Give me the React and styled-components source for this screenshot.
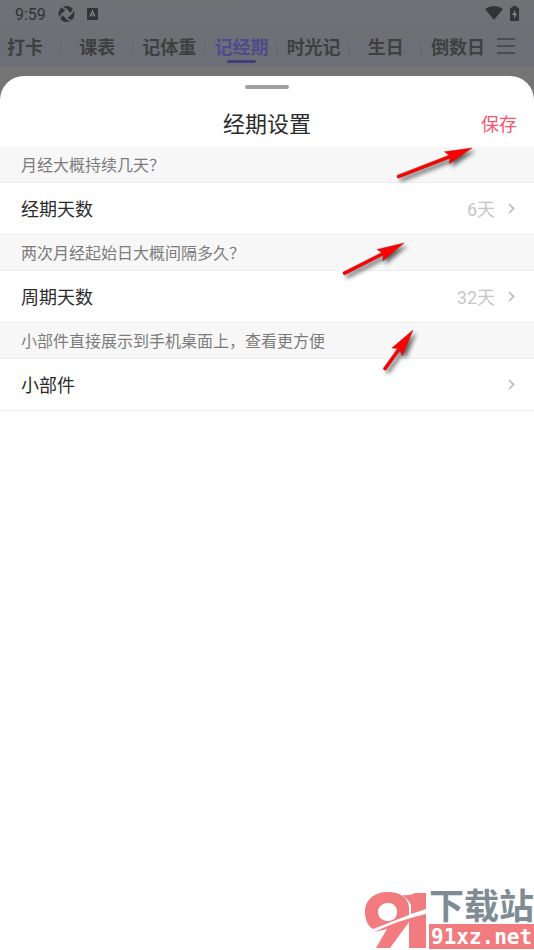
import styled, { createGlobalStyle } from 'styled-components'

const GlobalStyle = createGlobalStyle`
  *,
  *::before,
  *::after {
    box-sizing: border-box;
  }

  body {
    margin: 0;
    font-family: Roboto, 'Noto Sans CJK SC', sans-serif;
    background: #747474;
  }

  button {
    border: none;
    background: none;
    padding: 0;
    font-family: inherit;
    cursor: pointer;
  }
`

const Screen = styled.div`
  position: relative;
  min-height: 100vh;
  display: flex;
  flex-direction: column;
  overflow: hidden;
`

const TopArea = styled.header`
  height: 66px;
  margin-bottom: 10px;
  background: linear-gradient(#717276, #6d6e76);
`

const StatusBar = styled.div`
  height: 28px;
  padding: 0 15px;
  display: flex;
  align-items: center;
  gap: 12px;
  color: #323335;

  .time {
    font-size: 16px;
  }

  .right {
    margin-left: auto;
    display: flex;
    align-items: center;
    gap: 7px;
  }

  svg {
    display: block;
  }
`

const TabBar = styled.div`
  display: flex;
  height: 38px;
`

const Tabs = styled.nav`
  flex: 1;
  display: flex;
  margin-left: -11px;
`

const Tab = styled.button`
  flex: 1;
  display: flex;
  flex-direction: column;
  align-items: center;
  justify-content: space-between;
  color: ${({ $active }) => ($active ? '#4c4c8c' : '#3f3f40')};
  font-size: 18px;
  font-weight: 700;
  line-height: 40px;
  white-space: nowrap;
  background: linear-gradient(#696a6f, #696a6f) right 8px / 1px 22px no-repeat;

  &:last-child {
    background: none;
  }

  span {
    height: 32px;
  }

  &::after {
    content: '';
    width: 29px;
    height: 3px;
    margin-bottom: 3px;
    border-radius: 2px;
    background: ${({ $active }) => ($active ? '#3f3f7c' : 'transparent')};
  }
`

const MenuButton = styled.button`
  width: 40px;
  padding: 0 9px 2px 3px;
  display: flex;
  align-items: center;
  color: #404144;
`

const Sheet = styled.main`
  flex: 1;
  background: #fff;
  border-radius: 24px 24px 0 0;
`

const Handle = styled.div`
  width: 44px;
  height: 4px;
  margin: 0 auto;
  border-radius: 2px;
  background: #a0a0a0;
`

const SheetHeader = styled.div`
  padding-top: 9px;
  height: 71px;

  .bar {
    display: grid;
    grid-template-columns: 1fr auto 1fr;
    align-items: center;
    height: 58px;
    padding: 14px 17px 0;
  }
`

const Title = styled.h1`
  grid-column: 2;
  margin: 0;
  color: #2b2b2b;
  font-size: 22px;
  font-weight: 400;
  line-height: 32px;
`

const SaveButton = styled.button`
  justify-self: end;
  color: #f4566e;
  font-size: 18px;
  line-height: 28px;
`

const Hint = styled.p`
  height: 36px;
  margin: 0;
  padding: 0 21px;
  background: #f7f7f7;
  border-bottom: 1px solid #ededed;
  color: #7c7c7c;
  font-size: 16px;
  line-height: 38px;
`

const Row = styled.button`
  width: 100%;
  height: 52px;
  padding: 0 19px 0 21px;
  display: flex;
  align-items: center;
  border-bottom: 1px solid #ededed;
  color: #2b2b2b;
  font-size: 18px;
  line-height: 28px;

  span {
    padding-top: 3px;
  }

  .value {
    margin-left: auto;
    margin-right: 13px;
    color: #c6c6c6;
  }
`

const ArrowLayer = styled.svg`
  position: absolute;
  left: ${({ $x }) => $x}px;
  top: ${({ $y }) => $y}px;
  overflow: visible;
  pointer-events: none;
  filter: drop-shadow(3px 3px 2px rgba(0, 0, 0, 0.6));
`

const Watermark = styled.div`
  position: absolute;
  right: 0;
  bottom: 0;
  display: flex;
  align-items: flex-end;
  gap: 3px;

  .site {
    display: flex;
    flex-direction: column;
  }

  .name {
    height: 34px;
    padding-top: 1px;
    color: #7f8c93;
    font-size: 35px;
    font-weight: 700;
    line-height: 34px;
  }

  .domain {
    height: 25px;
    padding: 1px 0 0 2px;
    margin-bottom: 1px;
    background: #f17b7e;
    color: #fff;
    font-family: 'DejaVu Sans Mono', monospace;
    font-size: 21px;
    font-weight: 700;
    line-height: 24px;
  }
`

const tabs = ['打卡', '课表', '记体重', '记经期', '时光记', '生日', '倒数日']

const settings = [
  { hint: '月经大概持续几天？', label: '经期天数', value: '6天' },
  { hint: '两次月经起始日大概间隔多久？', label: '周期天数', value: '32天' },
  { hint: '小部件直接展示到手机桌面上，查看更方便', label: '小部件', value: '' },
]

const arrows = [
  { x: 397, y: 148, dx: 75, dy: 29 },
  { x: 343, y: 243, dx: 61, dy: 31 },
  { x: 384, y: 330, dx: 29, dy: 40 },
]

const Arrow = function Arrow({ x, y, dx, dy }) {
  const length = Math.hypot(dx, dy)
  const angle = (-Math.atan2(dy, dx) * 180) / Math.PI

  return (
    <ArrowLayer $x={x} $y={y} width={dx} height={dy} aria-hidden='true'>
      <path
        transform={`translate(0 ${dy}) rotate(${angle})`}
        d={`M1 -1.6L${length - 24} -1.6L${length - 27} -6.5L${length} 0L${length - 27} 6.5L${length - 24} 1.6L1 1.6Q-1 0 1 -1.6Z`}
        fill='#ff0000'
        stroke='#a01818'
        strokeWidth='0.4'
      />
    </ArrowLayer>
  )
}

const Chevron = function Chevron() {
  return (
    <svg width='7' height='12' viewBox='0 0 7 12' fill='none' stroke='#bdbdbd' strokeWidth='1.7'>
      <path d='M1 1L5.5 5.5L1 10' />
    </svg>
  )
}

const App = function App() {
  return (
    <Screen>
      <GlobalStyle />

      <TopArea>
        <StatusBar>
          <span className='time'>9:59</span>

          <svg width='17' height='16' viewBox='0 0 17 16'>
            <circle cx='8.5' cy='8' r='8' fill='currentColor' />
            <path d='M8.5 2.8L13.7 8L8.5 13.2L3.3 8Z' fill='#717276' />
            <path
              d='M8.5 3.5L4 1.2M13 8L15.6 3.4M8.5 12.5L13 14.8M4 8L1.4 12.6'
              stroke='#717276'
              strokeWidth='1.8'
            />
          </svg>

          <svg width='11' height='12' viewBox='0 0 11 12'>
            <rect width='11' height='12' rx='1' fill='currentColor' />
            <path d='M3 8.5L5.5 3L8 8.5M4 7H7' fill='none' stroke='#85868a' strokeWidth='1.2' />
          </svg>

          <div className='right'>
            <svg width='18' height='16' viewBox='0 0 18 16'>
              <path d='M0 3Q9 -3 18 3L9 14Z' fill='currentColor' />
            </svg>

            <svg width='9' height='17' viewBox='0 0 9 17'>
              <path d='M2.5 1.5V0H6.5V1.5H8Q9 1.5 9 2.5V14Q9 15 8 15H1Q0 15 0 14V2.5Q0 1.5 1 1.5Z' fill='currentColor' />
              <path d='M5.5 3.5L2 9H4.2V13L7 7.5H5Z' fill='#85868a' />
            </svg>
          </div>
        </StatusBar>

        <TabBar>
          <Tabs>
            {tabs.map((tab) => (
              <Tab key={tab} type='button' $active={tab === '记经期'}>
                <span>{tab}</span>
              </Tab>
            ))}
          </Tabs>

          <MenuButton type='button' aria-label='菜单'>
            <svg width='18' height='16' viewBox='0 0 18 16' stroke='currentColor' strokeWidth='1.3'>
              <path d='M0 1H18M0 8H18M0 15H18' />
            </svg>
          </MenuButton>
        </TabBar>
      </TopArea>

      <Sheet>
        <SheetHeader>
          <Handle />

          <div className='bar'>
            <Title>经期设置</Title>
            <SaveButton type='button'>保存</SaveButton>
          </div>
        </SheetHeader>

        {settings.map(({ hint, label, value }) => (
          <section key={label}>
            <Hint>{hint}</Hint>

            <Row type='button'>
              <span>{label}</span>
              <span className='value'>{value}</span>
              <Chevron />
            </Row>
          </section>
        ))}
      </Sheet>

      {arrows.map((arrow) => (
        <Arrow key={arrow.x} {...arrow} />
      ))}

      <Watermark>
        <svg width='62' height='60' viewBox='0 0 62 60' fill='#f17b7e' aria-hidden='true'>
          <path
            fillRule='evenodd'
            d='M24 2C10 2 1 10 1 22C1 30 4 36 9 39L27 32Q37 28 45 25V17C44 7 35 2 24 2ZM24 13C30 13 33 17 33 22C33 27 30 31 24 31C18 31 14 27 14 22C14 17 18 13 24 13Z'
          />
          <path d='M38 5Q46 6 51 3H62V19L47 24V15Q44 9 38 5Z' />
          <path d='M10 42Q35 30 62 24V58H45V32L26 58H12L23 39Z' />
        </svg>

        <div className='site'>
          <span className='name'>下载站</span>
          <span className='domain'>91xz.net</span>
        </div>
      </Watermark>
    </Screen>
  )
}

export default App
